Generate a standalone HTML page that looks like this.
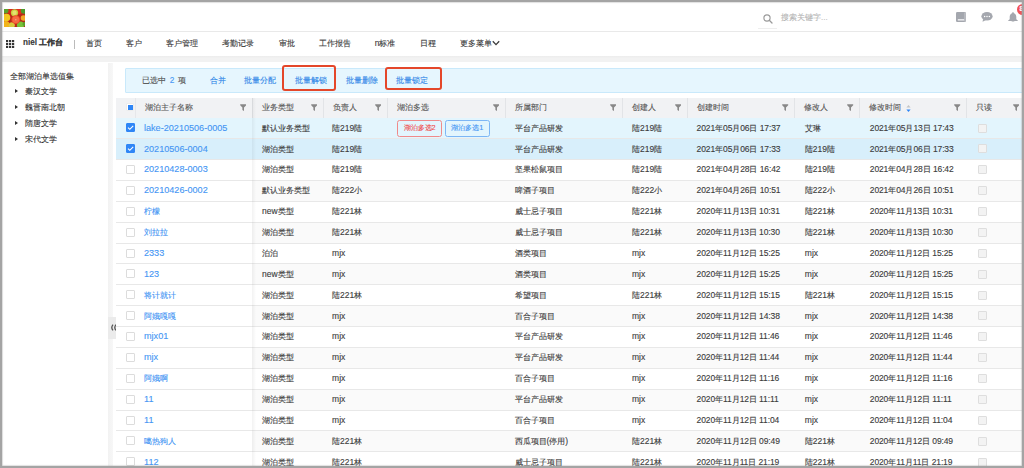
<!DOCTYPE html><html><head><meta charset="utf-8"><style>
*{margin:0;padding:0;box-sizing:border-box}
html,body{width:1024px;height:468px;overflow:hidden;background:#fff}
body{position:relative;-webkit-text-stroke:0.12px currentColor;font-family:"Liberation Sans",sans-serif;color:#333}
.a{position:absolute}
.c .l{font-size:8.5px}.c.lk .l{font-size:9.1px}.dt .l{letter-spacing:-0.12px}
.frame{position:absolute;left:0;top:0;width:1024px;height:468px;border:2px solid #a4a4a4;box-shadow:inset 0 0 1px 0.6px rgba(164,164,164,0.6);z-index:50;pointer-events:none}
.top{left:0;top:0;width:1024px;height:31.5px;background:#fff;border-bottom:1px solid #e9e9e9}
.nav{left:0;top:31.5px;width:1024px;height:25px;background:#fff}
.navi{top:36.9px;font-size:8.3px;line-height:12px;color:#3a3a3a;white-space:nowrap}
.band{left:0;top:56.4px;width:1024px;height:6px;background:linear-gradient(#ececec,#f2f2f2 40%,#f2f2f2)}
.side{left:0;top:62.6px;width:108.2px;height:406px;background:#fff}
.gap{left:108.2px;top:62.6px;width:4.5px;height:406px;background:linear-gradient(to right,#f2f2f2,#f7f7f7)}
.main{left:112.7px;top:62.6px;width:912px;height:406px;background:#fff}
.tree{font-size:8.2px;line-height:12px;color:#333;white-space:nowrap}
.tri{width:0;height:0;border-left:3.2px solid #333;border-top:2.4px solid transparent;border-bottom:2.4px solid transparent}
.bar{left:125.3px;top:68.3px;width:900px;height:24.4px;background:#e6f6fe;border:1px solid #c9e9fb;border-radius:1px}
.bt{top:74px;font-size:8.3px;line-height:12px;color:#2f86e8;white-space:nowrap}
.rb{border:2px solid #e4472a;border-radius:3px}
.hdr{left:116px;top:97.5px;width:908px;height:20.1px;background:#f1f2f4}
.hs{width:1px;background:#e2e4e7}
.ht{font-size:7.5px;line-height:12px;color:#555;white-space:nowrap}
.f{position:absolute}
.row{left:116px;width:908px;border-bottom:1px solid #e8e8e8;background:#fff}
.c{font-size:8.4px;line-height:12px;color:#3b3b3b;white-space:nowrap}
.lk{color:#4596f4}
.cb{width:9px;height:9px;border:1px solid #dcdcdc;border-radius:1px;background:#fff}
.cbon{background:#2f86f6;border-color:#2f86f6}
.ro{width:9px;height:9px;border:1px solid #dedede;border-radius:1px;background:#f3f3f3}
.tag{height:16.6px;border:1.2px solid;border-radius:2.5px;font-size:7.4px;line-height:14.2px;padding:0 5.5px;white-space:nowrap}
</style></head><body>
<div class="a top"></div>
<svg class="a" style="left:3.9px;top:9.1px" width="21" height="18" viewBox="0 0 21 18">
<rect width="21" height="18" fill="#b8281a"/>
<circle cx="6" cy="1.5" r="3.2" fill="#d82a1a"/><circle cx="15" cy="2" r="3.2" fill="#e0301c"/>
<circle cx="1.5" cy="1.5" r="3" fill="#5aa02a"/><circle cx="19.8" cy="1.8" r="3" fill="#4a9a2a"/>
<circle cx="10.5" cy="3.8" r="3.6" fill="#c8d040"/><circle cx="10.5" cy="3.8" r="2.2" fill="#e6e070"/>
<circle cx="2.5" cy="8.5" r="3.8" fill="#f2c820"/><circle cx="19.5" cy="9" r="2.8" fill="#f0a828"/>
<circle cx="2" cy="15.5" r="3.6" fill="#f2b41a"/><circle cx="7.8" cy="16.2" r="3" fill="#d8cc40"/>
<circle cx="16.5" cy="16" r="3.6" fill="#78c43a"/><circle cx="20.5" cy="15" r="2" fill="#5aa02a"/>
<circle cx="11.8" cy="10.7" r="4.4" fill="#ee4a26"/><circle cx="11.8" cy="10.7" r="3.4" fill="#f56a44"/><circle cx="11.8" cy="10.7" r="0.8" fill="#f8a080"/>
</svg>
<svg class="a" style="left:762.5px;top:13.8px" width="10" height="10" viewBox="0 0 10 10"><circle cx="4" cy="4" r="3.1" fill="none" stroke="#9a9a9a" stroke-width="1.15"/><path d="M6.3 6.3L9 9" stroke="#9a9a9a" stroke-width="1.3" stroke-linecap="round"/></svg>
<div class="a" style="left:781px;top:11.5px;font-size:8px;line-height:12px;color:#b5b5b5;white-space:nowrap">搜索关键字...</div>
<div class="a" style="left:758px;top:27.6px;width:19px;height:1px;background:#eee"></div>
<svg class="a" style="left:956px;top:12px" width="10" height="10" viewBox="0 0 10 10"><rect x="0" y="0" width="10" height="10" rx="1.2" fill="#a4a7ae"/><rect x="1.8" y="7" width="6.4" height="1.6" fill="#e6e7ea"/><rect x="8.5" y="0.5" width="1" height="9" fill="#c9cbd0"/></svg>
<svg class="a" style="left:980.8px;top:11.8px" width="12" height="10" viewBox="0 0 12 10"><ellipse cx="6" cy="4.3" rx="5.6" ry="4.3" fill="#a4a7ae"/><path d="M2 7L1.6 9.8L5 8Z" fill="#a4a7ae"/><circle cx="3.6" cy="4.4" r="0.75" fill="#fff"/><circle cx="6" cy="4.4" r="0.75" fill="#fff"/><circle cx="8.4" cy="4.4" r="0.75" fill="#fff"/></svg>
<svg class="a" style="left:1007.8px;top:11.5px" width="10" height="10.5" viewBox="0 0 10 10.5"><path d="M5 0.3C5.6 0.3 5.9 0.8 5.9 1.2C7.6 1.7 8.3 3.2 8.3 5V7.2L9.8 8.6V9H0.2V8.6L1.7 7.2V5C1.7 3.2 2.4 1.7 4.1 1.2C4.1 0.8 4.4 0.3 5 0.3Z" fill="#a4a7ae"/><path d="M3.6 9.4H6.4C6.4 10.1 5.7 10.5 5 10.5C4.3 10.5 3.6 10.1 3.6 9.4Z" fill="#a4a7ae"/></svg>
<div class="a" style="left:1016.5px;top:3.5px;width:11px;height:11px;border-radius:50%;background:#f25257"></div>
<div class="a" style="left:1019.5px;top:5px;font-size:7px;line-height:8px;color:#fff;font-weight:bold">8</div>
<div class="a nav"></div>
<svg class="a" style="left:6.4px;top:39.6px" width="8.3" height="8.3" viewBox="0 0 8.3 8.3"><rect x="0" y="0" width="2.2" height="2.2" fill="#333"/><rect x="0" y="3" width="2.2" height="2.2" fill="#333"/><rect x="0" y="6" width="2.2" height="2.2" fill="#333"/><rect x="3" y="0" width="2.2" height="2.2" fill="#333"/><rect x="3" y="3" width="2.2" height="2.2" fill="#333"/><rect x="3" y="6" width="2.2" height="2.2" fill="#333"/><rect x="6" y="0" width="2.2" height="2.2" fill="#333"/><rect x="6" y="3" width="2.2" height="2.2" fill="#333"/><rect x="6" y="6" width="2.2" height="2.2" fill="#333"/></svg>
<div class="a navi" style="left:23px;font-weight:bold;font-size:8.2px">niel 工作台</div>
<div class="a" style="left:73.5px;top:39.5px;width:1px;height:9px;background:#bbb"></div>
<div class="a navi" style="left:86.2px">首页</div>
<div class="a navi" style="left:126.0px">客户</div>
<div class="a navi" style="left:165.9px">客户管理</div>
<div class="a navi" style="left:222.1px">考勤记录</div>
<div class="a navi" style="left:278.79999999999995px">审批</div>
<div class="a navi" style="left:319.09999999999997px">工作报告</div>
<div class="a navi" style="left:374.79999999999995px"><span class="l">n</span>标准</div>
<div class="a navi" style="left:419.79999999999995px">日程</div>
<div class="a navi" style="left:459.7px">更多菜单</div>
<svg class="a" style="left:492px;top:40.3px" width="8" height="6" viewBox="0 0 8 6"><path d="M0.8 1.2L4 4.6L7.2 1.2" fill="none" stroke="#3a3a3a" stroke-width="1.25"/></svg>
<div class="a band"></div><div class="a side"></div><div class="a gap"></div><div class="a main"></div>
<div class="a tree" style="left:10.2px;top:70.5px">全部湖泊单选值集</div>
<div class="a tri" style="left:14.8px;top:89.1px"></div>
<div class="a tree" style="left:24.5px;top:85.5px">秦汉文学</div>
<div class="a tri" style="left:14.8px;top:105.1px"></div>
<div class="a tree" style="left:24.5px;top:101.5px">魏晋南北朝</div>
<div class="a tri" style="left:14.8px;top:121.1px"></div>
<div class="a tree" style="left:24.5px;top:117.5px">隋唐文学</div>
<div class="a tri" style="left:14.8px;top:137.1px"></div>
<div class="a tree" style="left:24.5px;top:133.5px">宋代文学</div>
<div class="a" style="left:107.8px;top:316.7px;width:9px;height:22.8px;background:#ebebeb"></div>
<svg class="a" style="left:109.8px;top:324.2px" width="7" height="7" viewBox="0 0 7 7"><path d="M3 0.6Q0.6 3.5 3 6.4M6 0.6Q3.6 3.5 6 6.4" fill="none" stroke="#555" stroke-width="1.3"/></svg>
<div class="a bar"></div>
<div class="a bt" style="left:142.4px;color:#505050;word-spacing:1px">已选中 <span class="l" style="color:#4596f4">2</span> 项</div>
<div class="a bt" style="left:210.1px">合并</div>
<div class="a bt" style="left:244.2px">批量分配</div>
<div class="a bt" style="left:294.8px">批量解锁</div>
<div class="a bt" style="left:345.8px">批量删除</div>
<div class="a bt" style="left:395.90000000000003px">批量锁定</div>
<div class="a rb" style="left:282.4px;top:65px;width:54.1px;height:26.4px"></div>
<div class="a rb" style="left:384.8px;top:66.8px;width:57.2px;height:23.7px"></div>
<div class="a hdr"></div>
<div class="a hs" style="left:251.5px;top:97.5px;height:20.849999999999994px"></div>
<div class="a hs" style="left:322.6px;top:97.5px;height:20.849999999999994px"></div>
<div class="a hs" style="left:387.1px;top:97.5px;height:20.849999999999994px"></div>
<div class="a hs" style="left:504.7px;top:97.5px;height:20.849999999999994px"></div>
<div class="a hs" style="left:621.7px;top:97.5px;height:20.849999999999994px"></div>
<div class="a hs" style="left:686.8px;top:97.5px;height:20.849999999999994px"></div>
<div class="a hs" style="left:794.3px;top:97.5px;height:20.849999999999994px"></div>
<div class="a hs" style="left:859.3px;top:97.5px;height:20.849999999999994px"></div>
<div class="a hs" style="left:966.2px;top:97.5px;height:20.849999999999994px"></div>
<div class="a" style="left:134.8px;top:97.5px;width:1px;height:20.6px;background:#e6e7ea"></div>
<div class="a cb" style="left:126.4px;top:102.9px;width:7.8px;height:8.3px;border-color:#ececec"></div>
<div class="a" style="left:128px;top:104.5px;width:5.2px;height:5.3px;background:#2f86f6"></div>
<div class="a ht" style="left:144.6px;top:101.5px">湖泊主子名称</div>
<svg class="a" style="left:239.5px;top:103.8px" width="6.4" height="7" viewBox="0 0 6.4 7"><path d="M0.2 0.2H6.2V1.2L4 3.4V7L2.4 6.1V3.4L0.2 1.2Z" fill="#888"/></svg>
<div class="a ht" style="left:261.6px;top:101.5px">业务类型</div>
<svg class="a" style="left:310.6px;top:103.8px" width="6.4" height="7" viewBox="0 0 6.4 7"><path d="M0.2 0.2H6.2V1.2L4 3.4V7L2.4 6.1V3.4L0.2 1.2Z" fill="#888"/></svg>
<div class="a ht" style="left:332.70000000000005px;top:101.5px">负责人</div>
<svg class="a" style="left:375.1px;top:103.8px" width="6.4" height="7" viewBox="0 0 6.4 7"><path d="M0.2 0.2H6.2V1.2L4 3.4V7L2.4 6.1V3.4L0.2 1.2Z" fill="#888"/></svg>
<div class="a ht" style="left:397.20000000000005px;top:101.5px">湖泊多选</div>
<svg class="a" style="left:492.7px;top:103.8px" width="6.4" height="7" viewBox="0 0 6.4 7"><path d="M0.2 0.2H6.2V1.2L4 3.4V7L2.4 6.1V3.4L0.2 1.2Z" fill="#888"/></svg>
<div class="a ht" style="left:514.8px;top:101.5px">所属部门</div>
<svg class="a" style="left:609.7px;top:103.8px" width="6.4" height="7" viewBox="0 0 6.4 7"><path d="M0.2 0.2H6.2V1.2L4 3.4V7L2.4 6.1V3.4L0.2 1.2Z" fill="#888"/></svg>
<div class="a ht" style="left:631.8000000000001px;top:101.5px">创建人</div>
<svg class="a" style="left:674.8px;top:103.8px" width="6.4" height="7" viewBox="0 0 6.4 7"><path d="M0.2 0.2H6.2V1.2L4 3.4V7L2.4 6.1V3.4L0.2 1.2Z" fill="#888"/></svg>
<div class="a ht" style="left:696.9px;top:101.5px">创建时间</div>
<svg class="a" style="left:782.3px;top:103.8px" width="6.4" height="7" viewBox="0 0 6.4 7"><path d="M0.2 0.2H6.2V1.2L4 3.4V7L2.4 6.1V3.4L0.2 1.2Z" fill="#888"/></svg>
<div class="a ht" style="left:804.4px;top:101.5px">修改人</div>
<svg class="a" style="left:847.3px;top:103.8px" width="6.4" height="7" viewBox="0 0 6.4 7"><path d="M0.2 0.2H6.2V1.2L4 3.4V7L2.4 6.1V3.4L0.2 1.2Z" fill="#888"/></svg>
<div class="a ht" style="left:869.4px;top:101.5px">修改时间</div>
<svg class="a" style="left:954.2px;top:103.8px" width="6.4" height="7" viewBox="0 0 6.4 7"><path d="M0.2 0.2H6.2V1.2L4 3.4V7L2.4 6.1V3.4L0.2 1.2Z" fill="#888"/></svg>
<div class="a ht" style="left:976.3000000000001px;top:101.5px">只读</div>
<svg class="a" style="left:1013.0px;top:103.8px" width="6.4" height="7" viewBox="0 0 6.4 7"><path d="M0.2 0.2H6.2V1.2L4 3.4V7L2.4 6.1V3.4L0.2 1.2Z" fill="#888"/></svg>
<svg class="a" style="left:906px;top:104.5px" width="5" height="7" viewBox="0 0 5 7"><path d="M2.5 0L4.6 2.6H0.4Z" fill="#c4c4c4"/><path d="M2.5 7L4.6 4.4H0.4Z" fill="#2f86f6"/></svg>
<div class="a row" style="top:118.35px;height:20.87px;background:#e3f5fd"></div>
<div class="a cb cbon" style="left:126.3px;top:123.38499999999999px"></div>
<svg class="a" style="left:126.3px;top:123.38499999999999px" width="9" height="9" viewBox="0 0 9 9"><path d="M2 4.6L3.8 6.3L7.2 2.8" fill="none" stroke="#fff" stroke-width="1.1"/></svg>
<div class="a c lk" style="left:144px;top:121.685px"><span class="l">lake-20210506-0005</span></div>
<div class="a c" style="left:262.1px;top:121.685px">默认业务类型</div>
<div class="a c" style="left:332.1px;top:121.685px">陆<span class="l">219</span>陆</div>
<div class="a tag" style="left:397px;top:120.38499999999999px;color:#f04a4a;border-color:#f08a8a">湖泊多选<span class="l">2</span></div>
<div class="a tag" style="left:444.8px;top:120.38499999999999px;color:#4596f4;border-color:#7db6f5">湖泊多选<span class="l">1</span></div>
<div class="a c" style="left:514.5px;top:121.685px">平台产品研发</div>
<div class="a c" style="left:632.0px;top:121.685px">陆<span class="l">219</span>陆</div>
<div class="a c dt" style="left:696.5999999999999px;top:121.685px"><span class="l">2021</span>年<span class="l">05</span>月<span class="l">06</span>日<span class="l"> 17:37</span></div>
<div class="a c" style="left:804.8px;top:121.685px">艾琳</div>
<div class="a c dt" style="left:869.8px;top:121.685px"><span class="l">2021</span>年<span class="l">05</span>月<span class="l">13</span>日<span class="l"> 17:43</span></div>
<div class="a ro" style="left:978.2px;top:123.585px"></div>
<div class="a row" style="top:139.22px;height:20.87px;background:#d8effb"></div>
<div class="a cb cbon" style="left:126.3px;top:144.255px"></div>
<svg class="a" style="left:126.3px;top:144.255px" width="9" height="9" viewBox="0 0 9 9"><path d="M2 4.6L3.8 6.3L7.2 2.8" fill="none" stroke="#fff" stroke-width="1.1"/></svg>
<div class="a c lk" style="left:144px;top:142.555px"><span class="l">20210506-0004</span></div>
<div class="a c" style="left:262.1px;top:142.555px">湖泊类型</div>
<div class="a c" style="left:332.1px;top:142.555px">陆<span class="l">219</span>陆</div>
<div class="a c" style="left:514.5px;top:142.555px">平台产品研发</div>
<div class="a c" style="left:632.0px;top:142.555px">陆<span class="l">219</span>陆</div>
<div class="a c dt" style="left:696.5999999999999px;top:142.555px"><span class="l">2021</span>年<span class="l">05</span>月<span class="l">06</span>日<span class="l"> 17:33</span></div>
<div class="a c" style="left:804.8px;top:142.555px">陆<span class="l">219</span>陆</div>
<div class="a c dt" style="left:869.8px;top:142.555px"><span class="l">2021</span>年<span class="l">05</span>月<span class="l">06</span>日<span class="l"> 17:33</span></div>
<div class="a ro" style="left:978.2px;top:144.455px"></div>
<div class="a row" style="top:160.09px;height:20.87px;background:#fff"></div>
<div class="a cb" style="left:126.3px;top:165.125px"></div>
<div class="a c lk" style="left:144px;top:163.425px"><span class="l">20210428-0003</span></div>
<div class="a c" style="left:262.1px;top:163.425px">湖泊类型</div>
<div class="a c" style="left:332.1px;top:163.425px">陆<span class="l">219</span>陆</div>
<div class="a c" style="left:514.5px;top:163.425px">坚果松鼠项目</div>
<div class="a c" style="left:632.0px;top:163.425px">陆<span class="l">219</span>陆</div>
<div class="a c dt" style="left:696.5999999999999px;top:163.425px"><span class="l">2021</span>年<span class="l">04</span>月<span class="l">28</span>日<span class="l"> 16:42</span></div>
<div class="a c" style="left:804.8px;top:163.425px">陆<span class="l">219</span>陆</div>
<div class="a c dt" style="left:869.8px;top:163.425px"><span class="l">2021</span>年<span class="l">04</span>月<span class="l">28</span>日<span class="l"> 16:42</span></div>
<div class="a ro" style="left:978.2px;top:165.32500000000002px"></div>
<div class="a row" style="top:180.95999999999998px;height:20.87px;background:linear-gradient(to right,#fff 135.5px,#fafafa 135.5px)"></div>
<div class="a cb" style="left:126.3px;top:185.99499999999998px"></div>
<div class="a c lk" style="left:144px;top:184.295px"><span class="l">20210426-0002</span></div>
<div class="a c" style="left:262.1px;top:184.295px">默认业务类型</div>
<div class="a c" style="left:332.1px;top:184.295px">陆<span class="l">222</span>小</div>
<div class="a c" style="left:514.5px;top:184.295px">啤酒子项目</div>
<div class="a c" style="left:632.0px;top:184.295px">陆<span class="l">222</span>小</div>
<div class="a c dt" style="left:696.5999999999999px;top:184.295px"><span class="l">2021</span>年<span class="l">04</span>月<span class="l">26</span>日<span class="l"> 10:51</span></div>
<div class="a c" style="left:804.8px;top:184.295px">陆<span class="l">222</span>小</div>
<div class="a c dt" style="left:869.8px;top:184.295px"><span class="l">2021</span>年<span class="l">04</span>月<span class="l">26</span>日<span class="l"> 10:51</span></div>
<div class="a ro" style="left:978.2px;top:186.195px"></div>
<div class="a row" style="top:201.82999999999998px;height:20.87px;background:#fff"></div>
<div class="a cb" style="left:126.3px;top:206.86499999999998px"></div>
<div class="a c lk" style="left:144px;top:205.165px">柠檬</div>
<div class="a c" style="left:262.1px;top:205.165px"><span class="l">new</span>类型</div>
<div class="a c" style="left:332.1px;top:205.165px">陆<span class="l">221</span>林</div>
<div class="a c" style="left:514.5px;top:205.165px">威士忌子项目</div>
<div class="a c" style="left:632.0px;top:205.165px">陆<span class="l">221</span>林</div>
<div class="a c dt" style="left:696.5999999999999px;top:205.165px"><span class="l">2020</span>年<span class="l">11</span>月<span class="l">13</span>日<span class="l"> 10:31</span></div>
<div class="a c" style="left:804.8px;top:205.165px">陆<span class="l">221</span>林</div>
<div class="a c dt" style="left:869.8px;top:205.165px"><span class="l">2020</span>年<span class="l">11</span>月<span class="l">13</span>日<span class="l"> 10:31</span></div>
<div class="a ro" style="left:978.2px;top:207.065px"></div>
<div class="a row" style="top:222.7px;height:20.87px;background:linear-gradient(to right,#fff 135.5px,#fafafa 135.5px)"></div>
<div class="a cb" style="left:126.3px;top:227.73499999999999px"></div>
<div class="a c lk" style="left:144px;top:226.035px">刘拉拉</div>
<div class="a c" style="left:262.1px;top:226.035px">湖泊类型</div>
<div class="a c" style="left:332.1px;top:226.035px">陆<span class="l">221</span>林</div>
<div class="a c" style="left:514.5px;top:226.035px">威士忌子项目</div>
<div class="a c" style="left:632.0px;top:226.035px">陆<span class="l">221</span>林</div>
<div class="a c dt" style="left:696.5999999999999px;top:226.035px"><span class="l">2020</span>年<span class="l">11</span>月<span class="l">13</span>日<span class="l"> 10:30</span></div>
<div class="a c" style="left:804.8px;top:226.035px">陆<span class="l">221</span>林</div>
<div class="a c dt" style="left:869.8px;top:226.035px"><span class="l">2020</span>年<span class="l">11</span>月<span class="l">13</span>日<span class="l"> 10:30</span></div>
<div class="a ro" style="left:978.2px;top:227.935px"></div>
<div class="a row" style="top:243.57px;height:20.87px;background:#fff"></div>
<div class="a cb" style="left:126.3px;top:248.605px"></div>
<div class="a c lk" style="left:144px;top:246.905px"><span class="l">2333</span></div>
<div class="a c" style="left:262.1px;top:246.905px">泊泊</div>
<div class="a c" style="left:332.1px;top:246.905px"><span class="l">mjx</span></div>
<div class="a c" style="left:514.5px;top:246.905px">酒类项目</div>
<div class="a c" style="left:632.0px;top:246.905px"><span class="l">mjx</span></div>
<div class="a c dt" style="left:696.5999999999999px;top:246.905px"><span class="l">2020</span>年<span class="l">11</span>月<span class="l">12</span>日<span class="l"> 15:25</span></div>
<div class="a c" style="left:804.8px;top:246.905px"><span class="l">mjx</span></div>
<div class="a c dt" style="left:869.8px;top:246.905px"><span class="l">2020</span>年<span class="l">11</span>月<span class="l">12</span>日<span class="l"> 15:25</span></div>
<div class="a ro" style="left:978.2px;top:248.805px"></div>
<div class="a row" style="top:264.44px;height:20.87px;background:linear-gradient(to right,#fff 135.5px,#fafafa 135.5px)"></div>
<div class="a cb" style="left:126.3px;top:269.475px"></div>
<div class="a c lk" style="left:144px;top:267.775px"><span class="l">123</span></div>
<div class="a c" style="left:262.1px;top:267.775px"><span class="l">new</span>类型</div>
<div class="a c" style="left:332.1px;top:267.775px"><span class="l">mjx</span></div>
<div class="a c" style="left:514.5px;top:267.775px">酒类项目</div>
<div class="a c" style="left:632.0px;top:267.775px"><span class="l">mjx</span></div>
<div class="a c dt" style="left:696.5999999999999px;top:267.775px"><span class="l">2020</span>年<span class="l">11</span>月<span class="l">12</span>日<span class="l"> 15:25</span></div>
<div class="a c" style="left:804.8px;top:267.775px"><span class="l">mjx</span></div>
<div class="a c dt" style="left:869.8px;top:267.775px"><span class="l">2020</span>年<span class="l">11</span>月<span class="l">12</span>日<span class="l"> 15:25</span></div>
<div class="a ro" style="left:978.2px;top:269.675px"></div>
<div class="a row" style="top:285.31px;height:20.87px;background:#fff"></div>
<div class="a cb" style="left:126.3px;top:290.345px"></div>
<div class="a c lk" style="left:144px;top:288.645px">将计就计</div>
<div class="a c" style="left:262.1px;top:288.645px">湖泊类型</div>
<div class="a c" style="left:332.1px;top:288.645px">陆<span class="l">221</span>林</div>
<div class="a c" style="left:514.5px;top:288.645px">希望项目</div>
<div class="a c" style="left:632.0px;top:288.645px">陆<span class="l">221</span>林</div>
<div class="a c dt" style="left:696.5999999999999px;top:288.645px"><span class="l">2020</span>年<span class="l">11</span>月<span class="l">12</span>日<span class="l"> 15:15</span></div>
<div class="a c" style="left:804.8px;top:288.645px">陆<span class="l">221</span>林</div>
<div class="a c dt" style="left:869.8px;top:288.645px"><span class="l">2020</span>年<span class="l">11</span>月<span class="l">12</span>日<span class="l"> 15:15</span></div>
<div class="a ro" style="left:978.2px;top:290.545px"></div>
<div class="a row" style="top:306.18px;height:20.87px;background:linear-gradient(to right,#fff 135.5px,#fafafa 135.5px)"></div>
<div class="a cb" style="left:126.3px;top:311.21500000000003px"></div>
<div class="a c lk" style="left:144px;top:309.515px">阿娥嘎嘎</div>
<div class="a c" style="left:262.1px;top:309.515px">湖泊类型</div>
<div class="a c" style="left:332.1px;top:309.515px"><span class="l">mjx</span></div>
<div class="a c" style="left:514.5px;top:309.515px">百合子项目</div>
<div class="a c" style="left:632.0px;top:309.515px"><span class="l">mjx</span></div>
<div class="a c dt" style="left:696.5999999999999px;top:309.515px"><span class="l">2020</span>年<span class="l">11</span>月<span class="l">12</span>日<span class="l"> 14:38</span></div>
<div class="a c" style="left:804.8px;top:309.515px"><span class="l">mjx</span></div>
<div class="a c dt" style="left:869.8px;top:309.515px"><span class="l">2020</span>年<span class="l">11</span>月<span class="l">12</span>日<span class="l"> 14:38</span></div>
<div class="a ro" style="left:978.2px;top:311.415px"></div>
<div class="a row" style="top:327.05px;height:20.87px;background:#fff"></div>
<div class="a cb" style="left:126.3px;top:332.08500000000004px"></div>
<div class="a c lk" style="left:144px;top:330.385px"><span class="l">mjx01</span></div>
<div class="a c" style="left:262.1px;top:330.385px">湖泊类型</div>
<div class="a c" style="left:332.1px;top:330.385px"><span class="l">mjx</span></div>
<div class="a c" style="left:514.5px;top:330.385px">平台产品研发</div>
<div class="a c" style="left:632.0px;top:330.385px"><span class="l">mjx</span></div>
<div class="a c dt" style="left:696.5999999999999px;top:330.385px"><span class="l">2020</span>年<span class="l">11</span>月<span class="l">12</span>日<span class="l"> 11:46</span></div>
<div class="a c" style="left:804.8px;top:330.385px"><span class="l">mjx</span></div>
<div class="a c dt" style="left:869.8px;top:330.385px"><span class="l">2020</span>年<span class="l">11</span>月<span class="l">12</span>日<span class="l"> 11:46</span></div>
<div class="a ro" style="left:978.2px;top:332.285px"></div>
<div class="a row" style="top:347.92px;height:20.87px;background:linear-gradient(to right,#fff 135.5px,#fafafa 135.5px)"></div>
<div class="a cb" style="left:126.3px;top:352.95500000000004px"></div>
<div class="a c lk" style="left:144px;top:351.255px"><span class="l">mjx</span></div>
<div class="a c" style="left:262.1px;top:351.255px">湖泊类型</div>
<div class="a c" style="left:332.1px;top:351.255px"><span class="l">mjx</span></div>
<div class="a c" style="left:514.5px;top:351.255px">平台产品研发</div>
<div class="a c" style="left:632.0px;top:351.255px"><span class="l">mjx</span></div>
<div class="a c dt" style="left:696.5999999999999px;top:351.255px"><span class="l">2020</span>年<span class="l">11</span>月<span class="l">12</span>日<span class="l"> 11:44</span></div>
<div class="a c" style="left:804.8px;top:351.255px"><span class="l">mjx</span></div>
<div class="a c dt" style="left:869.8px;top:351.255px"><span class="l">2020</span>年<span class="l">11</span>月<span class="l">12</span>日<span class="l"> 11:44</span></div>
<div class="a ro" style="left:978.2px;top:353.15500000000003px"></div>
<div class="a row" style="top:368.78999999999996px;height:20.87px;background:#fff"></div>
<div class="a cb" style="left:126.3px;top:373.825px"></div>
<div class="a c lk" style="left:144px;top:372.12499999999994px">阿娥啊</div>
<div class="a c" style="left:262.1px;top:372.12499999999994px">湖泊类型</div>
<div class="a c" style="left:332.1px;top:372.12499999999994px"><span class="l">mjx</span></div>
<div class="a c" style="left:514.5px;top:372.12499999999994px">百合子项目</div>
<div class="a c" style="left:632.0px;top:372.12499999999994px"><span class="l">mjx</span></div>
<div class="a c dt" style="left:696.5999999999999px;top:372.12499999999994px"><span class="l">2020</span>年<span class="l">11</span>月<span class="l">12</span>日<span class="l"> 11:16</span></div>
<div class="a c" style="left:804.8px;top:372.12499999999994px"><span class="l">mjx</span></div>
<div class="a c dt" style="left:869.8px;top:372.12499999999994px"><span class="l">2020</span>年<span class="l">11</span>月<span class="l">12</span>日<span class="l"> 11:16</span></div>
<div class="a ro" style="left:978.2px;top:374.025px"></div>
<div class="a row" style="top:389.65999999999997px;height:20.87px;background:linear-gradient(to right,#fff 135.5px,#fafafa 135.5px)"></div>
<div class="a cb" style="left:126.3px;top:394.695px"></div>
<div class="a c lk" style="left:144px;top:392.99499999999995px"><span class="l">11</span></div>
<div class="a c" style="left:262.1px;top:392.99499999999995px">湖泊类型</div>
<div class="a c" style="left:332.1px;top:392.99499999999995px"><span class="l">mjx</span></div>
<div class="a c" style="left:514.5px;top:392.99499999999995px">平台产品研发</div>
<div class="a c" style="left:632.0px;top:392.99499999999995px"><span class="l">mjx</span></div>
<div class="a c dt" style="left:696.5999999999999px;top:392.99499999999995px"><span class="l">2020</span>年<span class="l">11</span>月<span class="l">12</span>日<span class="l"> 11:11</span></div>
<div class="a c" style="left:804.8px;top:392.99499999999995px"><span class="l">mjx</span></div>
<div class="a c dt" style="left:869.8px;top:392.99499999999995px"><span class="l">2020</span>年<span class="l">11</span>月<span class="l">12</span>日<span class="l"> 11:11</span></div>
<div class="a ro" style="left:978.2px;top:394.895px"></div>
<div class="a row" style="top:410.53px;height:20.87px;background:#fff"></div>
<div class="a cb" style="left:126.3px;top:415.565px"></div>
<div class="a c lk" style="left:144px;top:413.86499999999995px"><span class="l">11</span></div>
<div class="a c" style="left:262.1px;top:413.86499999999995px">湖泊类型</div>
<div class="a c" style="left:332.1px;top:413.86499999999995px"><span class="l">mjx</span></div>
<div class="a c" style="left:514.5px;top:413.86499999999995px">百合子项目</div>
<div class="a c" style="left:632.0px;top:413.86499999999995px"><span class="l">mjx</span></div>
<div class="a c dt" style="left:696.5999999999999px;top:413.86499999999995px"><span class="l">2020</span>年<span class="l">11</span>月<span class="l">12</span>日<span class="l"> 11:04</span></div>
<div class="a c" style="left:804.8px;top:413.86499999999995px"><span class="l">mjx</span></div>
<div class="a c dt" style="left:869.8px;top:413.86499999999995px"><span class="l">2020</span>年<span class="l">11</span>月<span class="l">12</span>日<span class="l"> 11:04</span></div>
<div class="a ro" style="left:978.2px;top:415.765px"></div>
<div class="a row" style="top:431.4px;height:20.87px;background:linear-gradient(to right,#fff 135.5px,#fafafa 135.5px)"></div>
<div class="a cb" style="left:126.3px;top:436.435px"></div>
<div class="a c lk" style="left:144px;top:434.73499999999996px">噶热狗人</div>
<div class="a c" style="left:262.1px;top:434.73499999999996px">湖泊类型</div>
<div class="a c" style="left:332.1px;top:434.73499999999996px">陆<span class="l">221</span>林</div>
<div class="a c" style="left:514.5px;top:434.73499999999996px">西瓜项目<span class="l">(</span>停用<span class="l">)</span></div>
<div class="a c" style="left:632.0px;top:434.73499999999996px">陆<span class="l">221</span>林</div>
<div class="a c dt" style="left:696.5999999999999px;top:434.73499999999996px"><span class="l">2020</span>年<span class="l">11</span>月<span class="l">12</span>日<span class="l"> 09:49</span></div>
<div class="a c" style="left:804.8px;top:434.73499999999996px">陆<span class="l">221</span>林</div>
<div class="a c dt" style="left:869.8px;top:434.73499999999996px"><span class="l">2020</span>年<span class="l">11</span>月<span class="l">12</span>日<span class="l"> 09:49</span></div>
<div class="a ro" style="left:978.2px;top:436.635px"></div>
<div class="a row" style="top:452.27px;height:20.87px;background:#fff"></div>
<div class="a cb" style="left:126.3px;top:457.305px"></div>
<div class="a c lk" style="left:144px;top:455.60499999999996px"><span class="l">112</span></div>
<div class="a c" style="left:262.1px;top:455.60499999999996px">湖泊类型</div>
<div class="a c" style="left:332.1px;top:455.60499999999996px">陆<span class="l">221</span>林</div>
<div class="a c" style="left:514.5px;top:455.60499999999996px">威士忌子项目</div>
<div class="a c" style="left:632.0px;top:455.60499999999996px">陆<span class="l">221</span>林</div>
<div class="a c dt" style="left:696.5999999999999px;top:455.60499999999996px"><span class="l">2020</span>年<span class="l">11</span>月<span class="l">11</span>日<span class="l"> 21:19</span></div>
<div class="a c" style="left:804.8px;top:455.60499999999996px">陆<span class="l">221</span>林</div>
<div class="a c dt" style="left:869.8px;top:455.60499999999996px"><span class="l">2020</span>年<span class="l">11</span>月<span class="l">11</span>日<span class="l"> 21:19</span></div>
<div class="a ro" style="left:978.2px;top:457.505px"></div>
<div class="a" style="left:251.5px;top:97.5px;width:4px;height:380px;background:linear-gradient(to right,rgba(0,0,0,0.05),rgba(0,0,0,0))"></div>
<div class="frame"></div>
</body></html>
